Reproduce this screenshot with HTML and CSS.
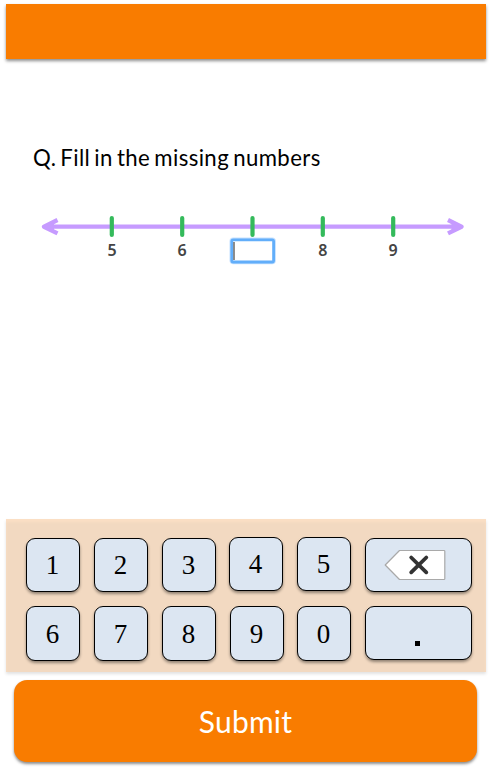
FILE: index.html
```html
<!DOCTYPE html>
<html lang="en">
<head>
<meta charset="utf-8">
<title>Number line</title>
<link rel="stylesheet" href="styles.css">
</head>
<body>
<header class="topbar"></header>
<main class="question">
  <h1 class="prompt">Q. Fill in the missing numbers</h1>
  <svg class="line" width="440" height="70" viewBox="32 205 440 70">
    <g fill="none" stroke="#c69bff" stroke-width="4.3" stroke-linejoin="round">
      <path d="M46 226.7H460"/>
      <path d="M57.5 220L44 226.7L57.5 233.4M448 220L461.5 226.7L448 233.4"/>
    </g>
    <path fill="#c69bff" d="M44 226.7L54 222V231.4ZM461.5 226.7L451.5 222V231.4Z"/>
    <path d="M111.8 218v17M182.2 218v17M252.5 218v17M322.8 218v17M393.2 218v17" stroke="#34ba5b" stroke-width="4.2" stroke-linecap="round"/>
    <g class="labels">
      <text x="112" y="255.8">5</text>
      <text x="182.2" y="255.8">6</text>
      <text x="322.8" y="255.8">8</text>
      <text x="393.2" y="255.8">9</text>
    </g>
    <rect x="230.2" y="238.2" width="45" height="25.4" rx="3" fill="none" stroke="#c5e1ff" stroke-width="1.4"/>
    <rect x="231.8" y="239.8" width="41.8" height="22.2" rx="1.5" fill="#fff" stroke="#62aefa" stroke-width="2.8"/>
    <path d="M234 242v18" stroke="#686868" stroke-width="1.5"/>
  </svg>
</main>
<section class="keypad">
  <button class="key">1</button>
  <button class="key">2</button>
  <button class="key">3</button>
  <button class="key raised left">4</button>
  <button class="key raised">5</button>
  <button class="key wide" aria-label="Backspace">
    <svg class="erase" width="62" height="32" viewBox="384 549 62 32">
      <path d="M385.2 565L399.5 550.5H444q.8 0 .8.8V578.7q0 .8-.8.8H399.5Z" fill="#fff" stroke="#a9a9a9" stroke-width="1.2" stroke-linejoin="round"/>
      <path d="M411.2 557.5L426.3 572.3M426.3 557.5L411.2 572.3" stroke="#333" stroke-width="3.8" stroke-linecap="round"/>
    </svg>
  </button>
  <button class="key tall">6</button>
  <button class="key tall">7</button>
  <button class="key tall">8</button>
  <button class="key tall">9</button>
  <button class="key tall">0</button>
  <button class="key wide" aria-label="Decimal point"><span class="dot"></span></button>
</section>
<button class="submit">Submit</button>
</body>
</html>
```
FILE: styles.css
```css
* { box-sizing: border-box; }

body {
  margin: 0;
  padding: 4px 6px 0;
  height: 770px;
  overflow: hidden;
  background: #fff;
  display: flex;
  flex-direction: column;
}

button { border: 0; margin: 0; padding: 0; }

.topbar {
  height: 55px;
  background: #f97c00;
  box-shadow: 0 2px 3px rgba(0, 0, 0, .45);
}

.question {
  height: 460px;
  padding: 84px 0 0 26px;
}

.prompt {
  margin: 0 0 32px 1px;
  height: 30px;
  font: 400 22.2px/30px Lato, sans-serif;
  letter-spacing: .4px;
  word-spacing: -2px;
  color: #000;
  white-space: nowrap;
}

.line { display: block; }

.labels {
  font: 600 16px "Noto Sans", "Open Sans", sans-serif;
  fill: #444;
  text-anchor: middle;
}

.keypad {
  height: 153px;
  padding: 19px 0 0 20px;
  background: #f2d9c1;
  box-shadow: inset 0 3px 3px #fbdfc4, 0 2px 3px rgba(0, 0, 0, .12);
  display: grid;
  grid-template-columns: 68px 68px 68px 67px 68px 107px;
  grid-template-rows: 68px 55px;
  align-items: start;
}

.key {
  width: 54px;
  height: 54px;
  display: flex;
  align-items: center;
  justify-content: center;
  border: 1px solid #000;
  border-radius: 9px;
  background: #dce6f2;
  box-shadow: 0 2px 3px rgba(0, 0, 0, .4);
  font: 27px/1 "Liberation Serif", serif;
  color: #000;
  padding-right: 1px;
}

.raised { margin-top: -1px; }
.left { margin-left: -1px; }
.tall { height: 55px; padding-top: 2px; }
.wide { width: 107px; padding: 0; }

.erase { margin-right: 7px; }

.dot {
  width: 5px;
  height: 5px;
  margin: 21px 3px 0 0;
  background: #000;
}

.submit {
  width: 463px;
  height: 82px;
  margin: 8px 0 0 8px;
  border-radius: 13px;
  background: #f97c00;
  box-shadow: 0 2px 3px rgba(0, 0, 0, .45);
  font: 30px/82px Lato, sans-serif;
  letter-spacing: .2px;
  color: #fff;
}
```
